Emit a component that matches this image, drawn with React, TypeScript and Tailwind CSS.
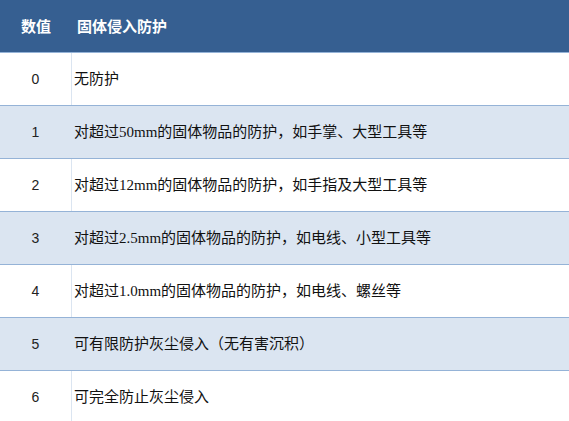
import React from 'react';

const rows: { level: string; text: React.ReactNode }[] = [
  { level: '0', text: '无防护' },
  { level: '1', text: '对超过50mm的固体物品的防护，如手掌、大型工具等' },
  { level: '2', text: '对超过12mm的固体物品的防护，如手指及大型工具等' },
  { level: '3', text: '对超过2.5mm的固体物品的防护，如电线、小型工具等' },
  { level: '4', text: '对超过1.0mm的固体物品的防护，如电线、螺丝等' },
  { level: '5', text: '可有限防护灰尘侵入（无有害沉积）' },
  { level: '6', text: '可完全防止灰尘侵入' },
];

const App = () => {
  return (
    <div className="w-[569px] h-[421px] overflow-hidden bg-white">
      {/* 表头 */}
      <div className="flex h-[53px] bg-[#365f91] border-b border-[#95b3d7] text-white text-[15px] font-bold font-['Noto_Sans_CJK_SC',sans-serif]">
        <div className="w-[72px] flex items-center justify-center">数值</div>
        <div className="flex-1 flex items-center pl-[5px]">固体侵入防护</div>
      </div>

      {rows.map((row, i) => (
        <div
          key={row.level}
          className={`flex h-[53px] border-b border-[#95b3d7] ${i % 2 === 1 ? 'bg-[#dbe5f1]' : 'bg-white'}`}
        >
          <div className="w-[72px] flex items-center justify-center border-r border-[#dbe5f1] text-[14px] text-[#222] font-['Liberation_Sans',sans-serif]">
            {row.level}
          </div>
          <div className="flex-1 flex items-center pl-[2px] text-[15px] text-[#111] font-['Liberation_Serif','Noto_Sans_CJK_SC',serif]">
            {row.text}
          </div>
        </div>
      ))}
    </div>
  );
};

export default App;
